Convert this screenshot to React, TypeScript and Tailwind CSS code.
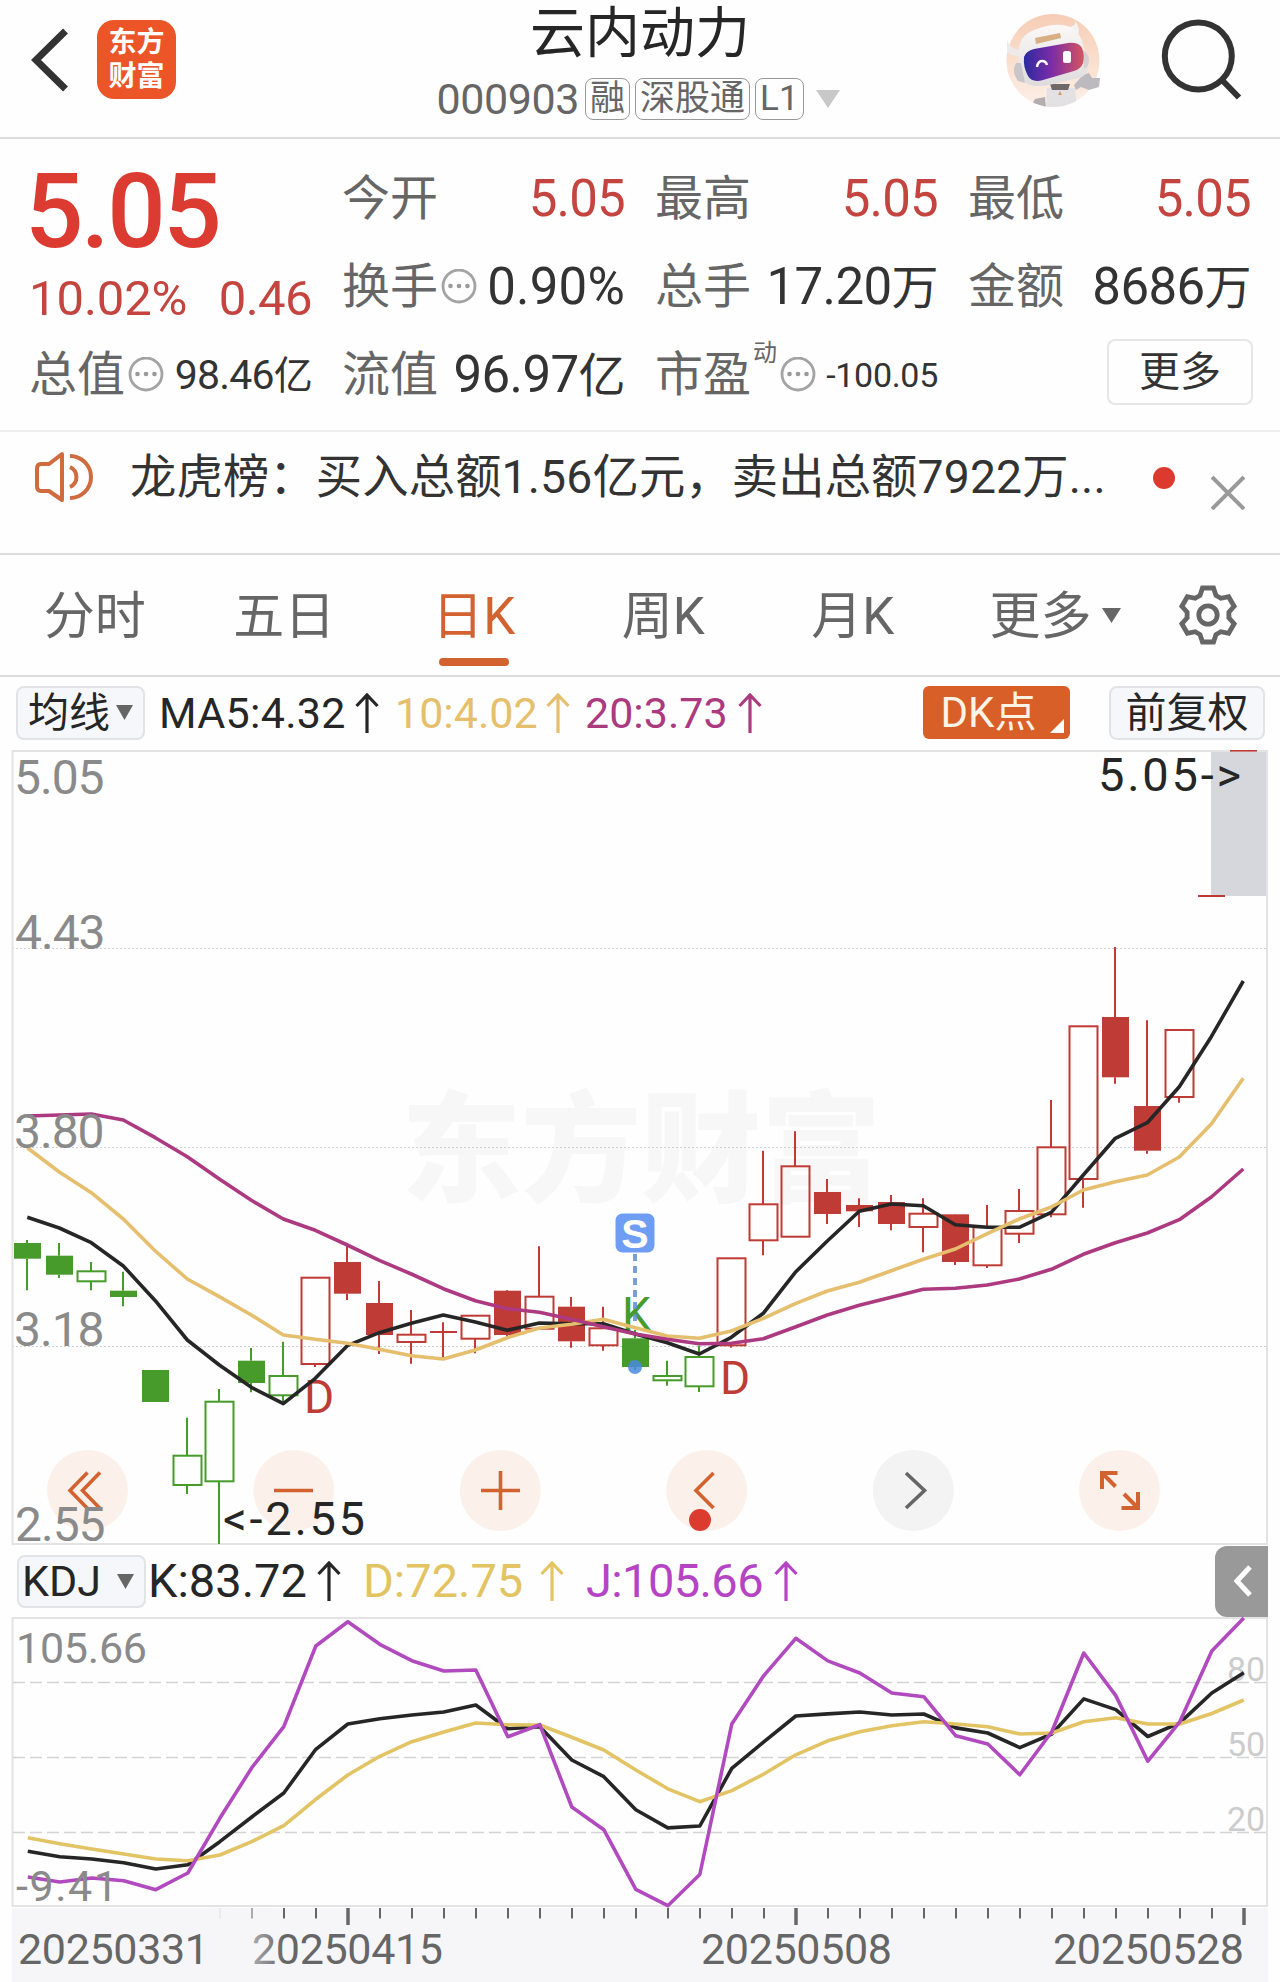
import type { ReactNode } from "react";

const RED = "#bf3b35";
const GREEN = "#469b2b";
const ORANGE = "#d2622f";

// wick top, body top, body bottom, wick bottom, colour, filled
type Candle = [number, number, number, number, "r" | "g", boolean];

const candles: Candle[] = [
  [1240, 1243, 1258.7, 1290.3, "g", true],
  [1243, 1255.7, 1274.7, 1278, "g", true],
  [1262, 1271.3, 1281.3, 1290.3, "g", false],
  [1271.7, 1290.7, 1297, 1306.3, "g", true],
  [1370, 1370, 1402, 1402, "g", true],
  [1417.7, 1455.7, 1485, 1494, "g", false],
  [1389, 1401.7, 1481.3, 1544, "g", false],
  [1348, 1360.7, 1383, 1392.3, "g", true],
  [1341.7, 1376, 1395.3, 1401.7, "g", false],
  [1277.7, 1277.7, 1364, 1367, "r", false],
  [1243.3, 1262, 1293.7, 1300, "r", true],
  [1281, 1303, 1335, 1354, "r", true],
  [1310, 1334.7, 1342, 1363.7, "r", false],
  [1322.3, 1331, 1333, 1357.7, "r", true],
  [1315.7, 1315.7, 1338.7, 1353.3, "r", false],
  [1290, 1290.7, 1335, 1337.7, "r", true],
  [1246.3, 1296.7, 1328.7, 1329, "r", false],
  [1297, 1306.7, 1341.3, 1347.7, "r", true],
  [1306.7, 1328.3, 1345.3, 1350.7, "r", false],
  [1330, 1338.3, 1367, 1370, "g", true],
  [1360.7, 1376, 1380.3, 1385.7, "g", false],
  [1345.7, 1357, 1386.3, 1392, "g", false],
  [1258.3, 1258.3, 1345.3, 1347.7, "r", false],
  [1150.7, 1204.3, 1240.3, 1255.3, "r", false],
  [1131.3, 1166.3, 1236.7, 1236.7, "r", false],
  [1179, 1192, 1214, 1224, "r", true],
  [1198.3, 1205, 1211.3, 1227, "r", true],
  [1195, 1202, 1224, 1230.3, "r", true],
  [1198.3, 1213.7, 1227, 1252.3, "r", false],
  [1214, 1214.3, 1262, 1265, "r", true],
  [1205, 1227.3, 1265.3, 1268, "r", false],
  [1189, 1211, 1233.7, 1243, "r", false],
  [1100, 1147.3, 1214.3, 1217.3, "r", false],
  [1026.3, 1026.3, 1179, 1207.7, "r", false],
  [947, 1017, 1077.3, 1083.7, "r", true],
  [1020.3, 1106, 1150.7, 1153.7, "r", true],
  [1030, 1030, 1097, 1102.7, "r", false],
  [895, 895, 897, 897, "r", true],
  [750, 750, 751.6, 751.6, "r", true],
];

const ma5 = [
  1217.3, 1228, 1242.7, 1266, 1300.7, 1340, 1365, 1387.3, 1403.7, 1378.3,
  1345.7, 1332.7, 1323.3, 1315, 1322, 1330.3, 1323, 1323.7, 1323.7, 1334,
  1342.7, 1354, 1337.3, 1313.3, 1272.3, 1241, 1211.3, 1204, 1205.7, 1224.7,
  1227.3, 1227.3, 1212.3, 1175, 1138.3, 1122.7, 1086.7, 1036.7, 981,
];
const ma10 = [
  1147.7, 1172, 1192.7, 1219, 1251, 1279, 1296.7, 1315, 1335, 1339.3, 1343.3,
  1349.3, 1355.7, 1359, 1350, 1337.7, 1328, 1324.3, 1319.3, 1327.7, 1336,
  1338.3, 1331, 1318.3, 1303.7, 1291, 1282.3, 1270.7, 1259.3, 1249, 1233.7,
  1219, 1207, 1190, 1181.7, 1175, 1157, 1124, 1078.3,
];
const ma20 = [
  1116, 1115, 1114, 1120, 1137.7, 1156.7, 1179, 1200.3, 1219, 1230.3, 1245,
  1260.3, 1274, 1288.7, 1300.7, 1308.7, 1312.3, 1319.3, 1326.7, 1334, 1339.3,
  1343.7, 1343.3, 1338.7, 1327, 1315, 1305.3, 1297.3, 1289.3, 1288.3, 1285,
  1279, 1269.3, 1254.3, 1242.7, 1233, 1219.7, 1197, 1169,
];

const kLine = [
  1851.3, 1856.7, 1859, 1862.7, 1869, 1864.7, 1841.7, 1817, 1793, 1749.3, 1724,
  1718.7, 1715, 1712, 1705, 1728.7, 1726.7, 1760, 1776.7, 1809.7, 1827.9, 1826,
  1768.4, 1741.9, 1716, 1713.9, 1712, 1715, 1714, 1727.9, 1733, 1747.6, 1734,
  1698.9, 1709.6, 1736.5, 1722.9, 1693, 1672.7,
];
const dLine = [
  1837.7, 1843.7, 1849, 1854, 1859, 1860.7, 1855, 1841.7, 1825.7, 1799.3, 1775,
  1756.3, 1741.7, 1732, 1723, 1724.7, 1725, 1737.3, 1750, 1770, 1788.8, 1801.7,
  1790.6, 1774, 1754.8, 1740.8, 1731.8, 1725.7, 1721.8, 1724, 1726.8, 1734,
  1733, 1721.8, 1717.8, 1724, 1724, 1713.5, 1700,
];
const jLine = [
  1877, 1882, 1878, 1880.7, 1889.7, 1873, 1818.3, 1767.7, 1726.7, 1646, 1621.7,
  1644.3, 1660.7, 1671, 1670, 1736.7, 1724.7, 1807, 1829.7, 1889.3, 1905.7,
  1874.5, 1724, 1675.6, 1638.3, 1660.9, 1673, 1693, 1696.7, 1735.8, 1744,
  1774.8, 1731.8, 1653, 1695.6, 1761.2, 1721.8, 1651, 1618,
];

const toPoints = (ys: number[], start: number) =>
  ys.map((y, i) => `${start + i * 32},${y}`).join(" ");

const gearPoints = Array.from({ length: 6 })
  .flatMap((_, k) => {
    const a = (k * Math.PI) / 3;
    return [
      [-8, -19.5],
      [-5.5, -27],
      [5.5, -27],
      [8, -19.5],
    ].map(([x, y]) => {
      const px = x * Math.cos(a) - y * Math.sin(a);
      const py = x * Math.sin(a) + y * Math.cos(a);
      return `${px.toFixed(2)},${py.toFixed(2)}`;
    });
  })
  .join(" ");

const Header = () => (
  <header className="grid h-[139px] grid-cols-[1fr_auto_1fr] border-b-2 border-[#dcdcdc]">
    <div className="flex items-start pt-5 pl-7">
      <svg className="h-20 w-[69px]" viewBox="28 20 69 80" fill="none">
        <path d="M65.5 31 36 60l29.500 29" stroke="#333" strokeWidth="7" />
      </svg>
      <div className="flex h-[79px] w-[79px] flex-col items-center justify-center rounded-[17px] bg-[#eb5528] text-[28px] leading-[34px] font-bold text-white">
        <span>东方</span>
        <span>财富</span>
      </div>
    </div>
    <div className="flex flex-col items-center">
      <h1 className="h-16 text-[55px] leading-[66px] text-[#262626]">
        云内动力
      </h1>
      <div className="mt-3.5 -ml-[3px] flex items-center gap-[5px] text-[35px] text-[#666]">
        <span className="mr-px text-[43px] leading-[42px] tracking-[-0.4px]">
          000903
        </span>
        <Tag>融</Tag>
        <Tag>深股通</Tag>
        <Tag>L1</Tag>
        <svg className="ml-1.5 h-[18px] w-[26px]" viewBox="0 0 26 18">
          <path d="M1 0h24L13 18Z" fill="#c8c8c8" />
        </svg>
      </div>
    </div>
    <div className="flex justify-end pr-[35px]">
      <Robot />
      <svg className="mt-4 ml-[57px] h-[86px] w-[86px] shrink-0" viewBox="1158 16 86 86" fill="none">
        <g stroke="#333" strokeWidth="6">
          <circle cx="1197.300" cy="56" r="33.500" />
          <path d="M1220.500 79.500 1238 97.500" />
        </g>
      </svg>
    </div>
  </header>
);

const Tag = ({ children }: { children: ReactNode }) => (
  <span className="flex h-[42px] items-center rounded-lg border-[1.5px] border-[#999] px-1 leading-[38px]">
    {children}
  </span>
);

const Robot = () => (
  <svg className="mt-3 h-[98px] w-[98px] shrink-0" viewBox="1003 12 98 98">
    <defs>
      <linearGradient id="visor" x1="0" y1="0" x2="1" y2="0">
        <stop offset="0" stopColor="#2b2b9e" />
        <stop offset="0.45" stopColor="#7a2ba8" />
        <stop offset="1" stopColor="#d5545f" />
      </linearGradient>
      <linearGradient id="halo" x1="0" y1="0" x2="0" y2="1">
        <stop offset="0" stopColor="#f6cdb5" />
        <stop offset="1" stopColor="#fdf0e8" />
      </linearGradient>
      <linearGradient id="shell" x1="0" y1="0" x2="0" y2="1">
        <stop offset="0" stopColor="#fbf8f7" />
        <stop offset="1" stopColor="#dedbdd" />
      </linearGradient>
      <clipPath id="round">
        <circle cx="1052" cy="60.500" r="46.500" />
      </clipPath>
    </defs>
    <circle cx="1052" cy="60.500" r="46.500" fill="url(#halo)" />
    <g clipPath="url(#round)">
      <path d="M1046 88h28l2 20h-31Z" fill="#e3e1e3" />
      <path d="M1049 84h20l-2 6h-16Z" fill="#6f6868" />
      <path d="M1044 97l-10 2-5 9h16Z" fill="#b5aeb0" />
      <path d="M1057 95l2-4 2 4Z" fill="#cf9c6c" />
    </g>
    <path d="M1073 85l9-10 6-2 3 5 8 0-1 9-10 3-8-3-5 3Z" fill="#bdbabf" />
    <path d="M1006 40q2 8 12 10v6q-11 0-12-6Z" fill="#eeeaea" />
    <path d="M1069 27q8-2 4-7 8 8 3 18Z" fill="#f5f1f0" />
    <path
      d="M1018 50q1-15 15-20 20-8 33-4 13 3 17 22l5 12q1 12-7 17l-28 7q-22 5-29-2-8-11-6-32Z"
      fill="url(#shell)"
    />
    <path d="M1015 63q-5 8 2 18l7 2-4-20Z" fill="#c9c5c9" />
    <path d="M1082 50q6 4 6 10 0 7-5 9Z" fill="#d6d0d3" />
    <path d="M1034 38l25-5 1 5-25 6Z" fill="#d8ae83" />
    <path
      d="M1023 57q2-6 10-8l34-6q11-1 14 5 3 8 1 15-2 6-9 8l-31 9q-11 3-15-4-5-9-4-19Z"
      fill="url(#visor)"
    />
    <path d="M1036 67q1-6 5-6 4 0 5 4" fill="none" stroke="#fff" strokeWidth="2.500" />
    <rect x="1062" y="51" width="8" height="12" rx="2.500" fill="#fff" />
  </svg>
);

const Info = () => (
  <svg className="ml-[3px] h-9 w-9 shrink-0" viewBox="0 0 36 36">
    <circle cx="18" cy="17" r="16" fill="none" stroke="#a3a3a3" strokeWidth="2.800" />
    <g fill="#999">
      <circle cx="9.500" cy="17" r="2.300" />
      <circle cx="18" cy="17" r="2.300" />
      <circle cx="26.500" cy="17" r="2.300" />
    </g>
  </svg>
);

type StatProps = {
  label: string;
  value: string;
  unit?: string;
  info?: boolean;
  red?: boolean;
};

const Stat = ({ label, value, unit, info, red }: StatProps) => (
  <div className="flex items-center whitespace-nowrap">
    <span className="text-[48px] text-[#666]">{label}</span>
    {info && <Info />}
    <span
      className={
        red
          ? "ml-auto text-[51px] tracking-[-0.8px] text-[#c4453f]"
          : "ml-auto text-[51px] tracking-[-0.6px] text-[#333]"
      }
    >
      {value}
      {unit && <span className="text-[47px]">{unit}</span>}
    </span>
  </div>
);

const Quote = () => (
  <section className="h-[293px] border-b-2 border-[#efefef] px-[29px] pt-4">
    <div className="grid grid-cols-4 grid-rows-[88px_88px_88px] gap-x-[30px] leading-[60px]">
      <div className="-ml-1 flex items-center pt-6 text-[103px] leading-none font-medium tracking-[-2.5px] text-[#dc3b32]">
        5.05
      </div>
      <Stat label="今开" value="5.05" red />
      <Stat label="最高" value="5.05" red />
      <Stat label="最低" value="5.05" red />

      <div className="flex items-center justify-between pt-6 text-[49px] text-[#c4453f]">
        <span className="tracking-[-0.1px]">10.02%</span>
        <span className="tracking-[-0.6px]">0.46</span>
      </div>
      <div className="flex items-center whitespace-nowrap">
        <span className="text-[48px] text-[#666]">换手</span>
        <Info />
        <span className="ml-auto text-[51px] tracking-[0.2px] text-[#333]">
          0.90%
        </span>
      </div>
      <Stat label="总手" value="17.20" unit="万" />
      <Stat label="金额" value="8686" unit="万" />

      <div className="flex items-center whitespace-nowrap">
        <span className="text-[48px] text-[#666]">总值</span>
        <Info />
        <span className="ml-auto text-[41px] tracking-[-0.8px] text-[#333]">
          98.46<span className="text-[39px]">亿</span>
        </span>
      </div>
      <Stat label="流值" value="96.97" unit="亿" />
      <div className="flex items-center whitespace-nowrap">
        <span className="text-[48px] text-[#666]">市盈</span>
        <span className="-mt-11 ml-0.5 text-[24px] text-[#666]">动</span>
        <Info />
        <span className="ml-auto text-[34px] tracking-[-0.3px] text-[#333]">
          -100.05
        </span>
      </div>
      <button className="mt-2 -mr-0.5 ml-auto h-[66px] w-[146px] rounded-lg border-2 border-[#e6e6e6] text-[41px] text-[#333]">
        更多
      </button>
    </div>
  </section>
);

const News = () => (
  <section className="flex h-[123px] border-b-2 border-[#dcdcdc] pt-4 pl-[33px]">
    <svg className="h-[58px] w-16 shrink-0" viewBox="33 448 64 58" fill="none">
      <g stroke="#cf6b3e" strokeWidth="4" strokeLinejoin="round">
        <path d="M62 454 49 464h-8q-4 0-4 5v17q0 5 4 5h8l13 9Z" />
        <path d="M70 456a21 21 0 0 1 0 42M70 467a11 11 0 0 1 0 20" />
      </g>
    </svg>
    <p className="ml-[33px] w-[1001px] text-[46.300px] leading-[58px] tracking-[0.15px] whitespace-nowrap text-[#333]">
      龙虎榜：买入总额1.56亿元，卖出总额7922万...
    </p>
    <span className="mt-[19px] ml-[22px] h-[22px] w-[22px] rounded-full bg-[#dc3a2e]" />
    <svg className="mt-7 ml-9 h-[34px] w-[34px]" viewBox="0 0 34 34" fill="none">
      <path d="M1 1l32 32M33 1 1 33" stroke="#999" strokeWidth="4" />
    </svg>
  </section>
);

const Tabs = () => (
  <nav className="flex h-[122px] items-center border-b-2 border-[#dcdcdc] text-[51px] leading-[60px] text-[#666]">
    {["分时", "五日", "日K", "周K", "月K"].map((tab) => (
      <div
        key={tab}
        className="relative flex h-full w-[189.500px] items-center justify-center pt-1"
      >
        <span className={tab === "日K" ? "text-[#d2622f]" : ""}>{tab}</span>
        {tab === "日K" && (
          <span className="absolute bottom-[9px] h-2 w-[70px] rounded-full bg-[#d2622f]" />
        )}
      </div>
    ))}
    <div className="ml-[42px] flex items-center">
      <span className="pt-1">更多</span>
      <svg className="ml-2.5 h-[15px] w-[19px]" viewBox="0 0 19 15">
        <path d="M0 0h19L9.500 15Z" fill="#666" />
      </svg>
    </div>
    <svg className="ml-[54px] h-[66px] w-[66px]" viewBox="-33 -33 66 66">
      <g fill="none" stroke="#666" strokeWidth="4.800">
        <polygon points={gearPoints} />
        <circle r="9.200" />
      </g>
    </svg>
  </nav>
);

const Up = () => (
  <svg
    className="ml-auto h-[40px] w-[24px] shrink-0"
    viewBox="0 0 24 40"
    fill="none"
    stroke="currentColor"
    strokeWidth="3.200"
  >
    <path d="M12 40V2M1.500 13 12 2l10.500 11" />
  </svg>
);

const Caret = () => (
  <svg className="h-[15px] w-[17px]" viewBox="0 0 17 15">
    <path d="M0 0h17L8.500 15Z" fill="#666" />
  </svg>
);

const MaBar = () => (
  <div className="flex h-[73px] items-center pr-[15px] pl-4 text-[43px] leading-[50px] whitespace-nowrap text-[#262626]">
    <button className="-mt-0.5 flex h-[54px] w-[129px] items-center justify-center gap-1.5 rounded-lg border-2 border-[#e1e3e7] bg-[#f6f7fa] text-[41px]">
      均线
      <Caret />
    </button>
    <div className="-mt-0.5 ml-3.5 flex w-[220px] items-center">
      <span className="tracking-[0.300px]">MA5:4.32</span>
      <Up />
    </div>
    <div className="-mt-0.5 ml-4 flex w-[175px] items-center text-[#e6bf6c]">
      <span>10:4.02</span>
      <Up />
    </div>
    <div className="-mt-0.5 ml-[15px] flex w-[177px] items-center text-[#ab3a7f]">
      <span>20:3.73</span>
      <Up />
    </div>
    <button className="relative -mt-0.5 ml-auto h-[53px] w-[147px] rounded-md bg-[#d85f28] pr-4 text-[42px] text-[#fff3e6]">
      DK点
      <svg className="absolute right-1.5 bottom-1.5 h-3.5 w-3.5" viewBox="0 0 14 14">
        <path d="M14 0v14H0Z" fill="#fff" />
      </svg>
    </button>
    <button className="-mt-0.5 ml-[39px] h-[54px] w-[156px] rounded-lg border-2 border-[#e1e3e7] bg-[#f6f7fa] text-[41px]">
      前复权
    </button>
  </div>
);

const PriceChart = () => (
  <svg className="block h-[795px] w-full" viewBox="0 750 1280 795">
    <text x="401" y="1193" fontSize="120" fontWeight="900" fill="#f7f7f7" textLength="480">
      东方财富
    </text>
    <g stroke="#cfcfcf" strokeWidth="1.200" strokeDasharray="2 2">
      <path d="M12 948.500H1267M12 1147.500H1267M12 1346.500H1267" />
    </g>
    <rect x="1211" y="750" width="57" height="146" fill="#d5d7dd" />
    <path d="M12.500 1544V751H1267V1544Z" fill="none" stroke="#e3e3e3" strokeWidth="2" />

    {[87.5, 293.8, 500.3, 706.7, 913.3, 1119.5].map((x, i) => (
      <circle key={x} cx={x} cy="1490.500" r="40.500" fill={i === 4 ? "#f3f3f3" : "#fbf1ea"} />
    ))}
    <g fill="none" stroke={ORANGE} strokeWidth="3.600">
      <path d="M87.500 1472.500 70 1490.500l17.500 18M100 1472.500l-17.500 18 17.500 18" />
      <path d="M274 1490.500h39M481 1490.500h39M500.500 1471v39" />
      <path d="M713.500 1473 696 1490.500l17.500 17.500" />
      <path
        strokeWidth="4"
        d="M1102 1489v-16H1117.500M1102 1473l13.500 13.500M1138 1492v16H1121.500M1138 1508l-14-14"
      />
      <path d="M906 1473l18.500 17.500L906 1508" stroke="#666" />
    </g>
    <circle cx="700" cy="1520" r="11" fill="#dc3b30" />

    {candles.map(([wt, bt, bb, wb, c, filled], i) => {
      const x = 27 + i * 32;
      const color = c === "r" ? RED : GREEN;
      return (
        <g key={i} stroke={color} strokeWidth="2" fill={filled ? color : "none"}>
          <path d={`M${x} ${wt}V${bt}M${x} ${bb}V${wb}`} />
          {filled ? (
            <rect x={x - 13} y={bt} width="27" height={bb - bt} stroke="none" />
          ) : (
            <rect x={x - 13.5} y={bt} width="28" height={bb - bt} />
          )}
        </g>
      );
    })}

    <g fontSize="46">
      <text x="304" y="1413" fill={RED}>D</text>
      <text x="720" y="1394" fill={RED}>D</text>
      <text x="622" y="1330" fill={GREEN}>K</text>
    </g>
    <path d="M635 1254V1322" stroke="#5e8fd6" strokeOpacity="0.85" strokeWidth="4" strokeDasharray="7 5" />

    <g fill="none" strokeWidth="3.600" strokeLinejoin="round">
      <polyline points={toPoints(ma5, 27.3)} stroke="#262626" />
      <polyline points={toPoints(ma10, 27.3)} stroke="#e5be6e" />
      <polyline points={toPoints(ma20, 27.3)} stroke="#ad3a80" />
    </g>

    <circle cx="635" cy="1367" r="7" fill="#4a8ae0" fillOpacity="0.85" />
    <rect x="615.500" y="1213.500" width="39" height="39" rx="7" fill="#6f9df3" />
    <text x="635" y="1248" fontSize="41" textAnchor="middle" fill="#fff" fontWeight="700" fontFamily="Liberation Sans">
      S
    </text>

    <g fontSize="48" fill="#8a8a8a" letterSpacing="-1">
      <text x="14" y="793.500">5.05</text>
      <text x="15" y="949">4.43</text>
      <text x="14" y="1147.500">3.80</text>
      <text x="14" y="1346">3.18</text>
      <text x="15" y="1540.500">2.55</text>
    </g>
    <g fontSize="47" fill="#262626">
      <text x="223" y="1534.500" textLength="142">{"<-2.55"}</text>
      <text x="1098" y="791" textLength="143">{"5.05->"}</text>
    </g>
  </svg>
);

const KdjBar = () => (
  <div className="flex h-[72px] items-center pl-[17px] text-[47px] leading-[50px] whitespace-nowrap text-[#262626]">
    <button className="flex h-[53px] w-[129px] items-center justify-between rounded-lg border-2 border-[#e1e3e7] bg-[#f6f7fa] pr-2.5 pl-[3px] text-[43px]">
      KDJ
      <Caret />
    </button>
    <div className="ml-0.5 flex w-[193px] items-center">
      <span>K:83.72</span>
      <Up />
    </div>
    <div className="ml-[22px] flex w-[201px] items-center text-[#e3c463]">
      <span>D:72.75</span>
      <Up />
    </div>
    <div className="ml-[22px] flex w-[212px] items-center text-[#b444c4]">
      <span className="tracking-[-0.600px]">J:105.66</span>
      <Up />
    </div>
    <button className="mr-3 ml-auto flex h-[71px] w-[53px] items-center justify-center rounded-l-xl bg-[#999]">
      <svg className="ml-1 h-8 w-5" viewBox="0 0 20 32" fill="none">
        <path d="M16 2 3 16l13 14" stroke="#fff" strokeWidth="5" />
      </svg>
    </button>
  </div>
);

const dates = [
  { x: 18, label: "20250331" },
  { x: 252, label: "20250415" },
  { x: 701, label: "20250508" },
  { x: 1053, label: "20250528" },
];

const KdjChart = () => (
  <svg className="block h-[365px] w-full" viewBox="0 1617 1280 365">
    <defs>
      <linearGradient id="fade">
        <stop offset="0" stopColor="#f6f6f9" />
        <stop offset="0.200" stopColor="#f6f6f9" stopOpacity="0.900" />
        <stop offset="1" stopColor="#f6f6f9" stopOpacity="0" />
      </linearGradient>
    </defs>
    <path d="M12.500 1906V1618H1267V1906Z" fill="none" stroke="#e3e3e3" strokeWidth="2" />
    <path
      d="M13 1682.500H1267M13 1757.500H1267M13 1832.500H1267"
      stroke="#d4d4d4"
      strokeWidth="1.500"
      strokeDasharray="12 5"
    />
    <g fontSize="34" fill="#ccc">
      <text x="1227" y="1681">80</text>
      <text x="1227" y="1756">50</text>
      <text x="1227" y="1831">20</text>
    </g>
    <g fill="none" strokeWidth="3.600" strokeLinejoin="round">
      <polyline points={toPoints(kLine, 27.8)} stroke="#262626" />
      <polyline points={toPoints(dLine, 27.8)} stroke="#e2c465" />
      <polyline points={toPoints(jLine, 27.8)} stroke="#b14abf" />
    </g>
    <g fontSize="43" fill="#8a8a8a">
      <text x="16" y="1663" textLength="131">105.66</text>
      <text x="16" y="1901" textLength="102">-9.41</text>
    </g>

    <rect x="12" y="1908" width="1256" height="74" fill="#f6f6f9" />
    {Array.from({ length: 33 }).map((_, n) => {
      const i = n + 6;
      const major = i === 10 || i === 24 || i === 38;
      return (
        <path
          key={i}
          d={`M${28 + i * 32} 1908v${major ? 17 : 10.5}`}
          stroke="#666"
          strokeWidth={major ? 3.5 : 2}
        />
      );
    })}
    <g fontSize="43" fill="#666">
      {dates.map((d) => (
        <text key={d.x} x={d.x} y="1964" textLength="191">
          {d.label}
        </text>
      ))}
    </g>
    <rect x="208" y="1907.500" width="76" height="74" fill="url(#fade)" />
  </svg>
);

export default function App() {
  return (
    <main className="h-[1982px] w-[1280px] overflow-hidden bg-[#fefefe] font-['Roboto','Noto_Sans_CJK_SC',sans-serif]">
      <Header />
      <Quote />
      <News />
      <Tabs />
      <MaBar />
      <PriceChart />
      <KdjBar />
      <KdjChart />
    </main>
  );
}
